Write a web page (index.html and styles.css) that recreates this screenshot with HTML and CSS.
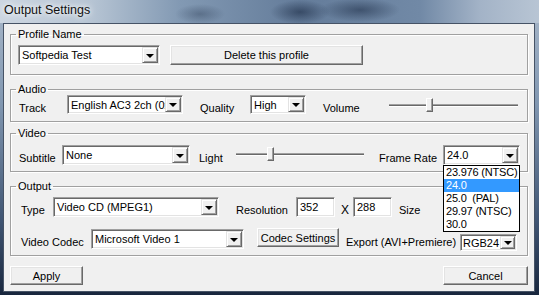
FILE: index.html
```html
<!DOCTYPE html>
<html lang="en">

<head>
  <meta charset="UTF-8">
  <title>Output Settings</title>
  <link rel="stylesheet" href="styles.css">
</head>

<body>
  <div class="window">
    <div class="titlebar">Output Settings</div>
    <div class="client">

      <fieldset class="group group-profile">
        <legend>Profile Name</legend>
        <div class="row">
          <div class="combo cb-profile"><span class="val">Softpedia Test</span><span class="arrow"></span></div>
          <button class="btn btn-delete">Delete this profile</button>
        </div>
      </fieldset>

      <fieldset class="group group-audio">
        <legend>Audio</legend>
        <div class="row row-short">
          <span class="lbl lbl-track">Track</span>
          <div class="combo cb-track"><span class="val">English AC3 2ch (0x80)</span><span class="arrow"></span></div>
          <span class="lbl lbl-quality">Quality</span>
          <div class="combo cb-quality"><span class="val">High</span><span class="arrow"></span></div>
          <span class="lbl lbl-volume">Volume</span>
          <div class="slider sl-volume"><span class="thumb"></span></div>
        </div>
      </fieldset>

      <fieldset class="group group-video">
        <legend>Video</legend>
        <div class="row">
          <span class="lbl lbl-subtitle">Subtitle</span>
          <div class="combo cb-subtitle"><span class="val">None</span><span class="arrow"></span></div>
          <span class="lbl lbl-light">Light</span>
          <div class="slider sl-light"><span class="thumb"></span></div>
          <span class="lbl lbl-rate">Frame Rate</span>
          <div class="dropdown">
            <div class="combo cb-rate"><span class="val">24.0</span><span class="arrow"></span></div>
            <ul class="list">
              <li>23.976 (NTSC)</li>
              <li class="selected">24.0</li>
              <li>25.0 &nbsp;(PAL)</li>
              <li>29.97 (NTSC)</li>
              <li>30.0</li>
            </ul>
          </div>
        </div>
      </fieldset>

      <fieldset class="group group-output">
        <legend>Output</legend>
        <div class="row">
          <span class="lbl lbl-type">Type</span>
          <div class="combo cb-type"><span class="val">Video CD (MPEG1)</span><span class="arrow"></span></div>
          <span class="lbl lbl-res">Resolution</span>
          <div class="field">352</div>
          <span class="lbl lbl-x">X</span>
          <div class="field">288</div>
          <span class="lbl lbl-size">Size</span>
        </div>
        <div class="row row-codec">
          <span class="lbl lbl-codec">Video Codec</span>
          <div class="combo cb-codec"><span class="val">Microsoft Video 1</span><span class="arrow"></span></div>
          <button class="btn btn-codec">Codec Settings</button>
          <span class="lbl lbl-export">Export (AVI+Premiere)</span>
          <div class="combo cb-export"><span class="val">RGB24</span><span class="arrow"></span></div>
        </div>
      </fieldset>

      <div class="actions">
        <button class="btn btn-apply">Apply</button>
        <button class="btn btn-cancel">Cancel</button>
      </div>

    </div>
  </div>
</body>

</html>
```

FILE: styles.css
```css
body {
  margin: 0;
  width: 539px;
  height: 295px;
  overflow: hidden;
  font-family: "Liberation Sans", Arial, sans-serif;
  font-size: 11px;
  color: #000;
}

.window {
  height: 295px;
  background: linear-gradient(180deg, #a9b8ca 0, #8197b1 35%, #405573 75%, #18263d 100%);
}

.titlebar {
  height: 23px;
  padding-left: 4px;
  box-sizing: border-box;
  font-size: 12.5px;
  line-height: 20px;
  color: #111;
  text-shadow: 0 0 5px #fff, 0 0 8px #fff;
  background:
    radial-gradient(ellipse 30px 12px at 300px 12px, rgba(20, 35, 60, 0.55), transparent),
    radial-gradient(ellipse 40px 12px at 360px 10px, rgba(20, 35, 60, 0.5), transparent),
    radial-gradient(ellipse 25px 10px at 200px 14px, rgba(30, 45, 70, 0.35), transparent),
    linear-gradient(90deg, #ccd6e1 0, #b7c5d4 90px, #8299b3 180px, #647c9a 300px, #7189a6 420px, #a3b3c7 480px, #b8c5d4 539px);
}

.client {
  margin-left: 3px;
  width: 530px;
  height: 267px;
  border: 1px solid #465366;
  background: #f0f0f0;
}

/* group boxes */
.group {
  box-sizing: border-box;
  width: 518px;
  min-width: 0;
  margin: 0 0 0 6px;
  padding: 0 6px 0 7px;
  border: 1px solid #a0a0a0;
  box-shadow: inset 1px 1px 0 #fff, 1px 1px 0 #fff;
}

.group legend {
  margin-left: -2px;
  padding: 0 2px;
  line-height: 12px;
}

.group-profile {
  margin-top: 4px;
  padding-top: 5px;
  padding-bottom: 9px;
}

.group-audio {
  margin-top: 8px;
  padding-top: 0;
  padding-bottom: 7px;
}

.group-video {
  margin-top: 5px;
  padding-top: 6px;
  padding-bottom: 6px;
}

.group-output {
  margin-top: 8px;
  padding-top: 5px;
  padding-bottom: 6px;
}

.row {
  display: flex;
  align-items: center;
  height: 20px;
}

.row-short {
  height: 19px;
}

.row-codec {
  margin-top: 12px;
}

.lbl {
  flex: none;
  box-sizing: border-box;
  padding-top: 6px;
  line-height: 14px;
  white-space: nowrap;
}

.lbl-track { margin-left: 1px; width: 48px; }
.lbl-quality { margin-left: 17px; width: 50px; }
.lbl-volume { margin-left: 17px; width: 66px; }
.lbl-subtitle { margin-left: 1px; width: 43px; }
.lbl-light { margin-left: 9px; width: 37px; }
.lbl-rate { margin-left: 15px; width: 64px; }
.lbl-type { margin-left: 3px; width: 32px; }
.lbl-res { margin-left: 17px; width: 60px; }
.lbl-x { margin-left: 6px; width: 12px; font-size: 12px; }
.lbl-size { margin-left: 7px; }
.lbl-codec { margin-left: 3px; width: 70px; }
.lbl-export { margin-left: 7px; width: 114px; }

/* combo boxes and edit fields */
.combo,
.field {
  flex: none;
  box-sizing: border-box;
  display: flex;
  height: 100%;
  padding: 1px;
  background: #fff;
  border: 1px solid;
  border-color: #a0a0a0 #fff #fff #a0a0a0;
  box-shadow: inset 1px 1px 0 #696969, inset -1px -1px 0 #e3e3e3;
}

.combo .val {
  flex: 1;
  min-width: 0;
  overflow: hidden;
  white-space: nowrap;
  padding: 1px 0 0 2px;
  line-height: 14px;
}

.arrow {
  flex: none;
  box-sizing: border-box;
  width: 16px;
  display: flex;
  align-items: center;
  justify-content: center;
  background: #f0f0f0;
  border: 1px solid;
  border-color: #e3e3e3 #696969 #696969 #e3e3e3;
  box-shadow: inset 1px 1px 0 #fff, inset -1px -1px 0 #a0a0a0;
}

.arrow::after {
  content: "";
  border: 4px solid transparent;
  border-top-color: #000;
  border-bottom: 0;
  margin-top: 1px;
}

.field {
  width: 39px;
  padding: 2px 0 0 3px;
  line-height: 14px;
}

.cb-profile { width: 142px; }
.cb-track { width: 116px; }
.cb-quality { width: 56px; }
.cb-subtitle { width: 128px; }
.cb-rate { width: 77px; }
.cb-type { width: 166px; }
.cb-codec { width: 153px; }
.cb-export { width: 57px; height: 17px; margin-top: 7px; }
.cb-export .val { padding: 0 0 0 1px; }
.cb-export .arrow { width: 15px; }

/* track bars */
.slider {
  flex: none;
  height: 14px;
  background: linear-gradient(180deg, transparent 0 6px, #a0a0a0 6px 7px, #696969 7px 8px, #fff 8px 9px, transparent 9px);
}

.sl-volume { width: 129px; }
.sl-light { width: 128px; margin-top: -3px; }

.thumb {
  display: block;
  box-sizing: border-box;
  width: 7px;
  height: 14px;
  background: #f0f0f0;
  border: 1px solid;
  border-color: #fff #696969 #696969 #fff;
  box-shadow: inset -1px -1px 0 #a0a0a0;
}

.sl-volume .thumb { margin-left: 37px; }
.sl-light .thumb { margin-left: 31px; }

/* open frame rate list */
.dropdown {
  position: relative;
  height: 100%;
}

.dropdown .cb-rate {
  height: 100%;
}

.list {
  position: absolute;
  top: 100%;
  left: 0;
  z-index: 10;
  box-sizing: border-box;
  width: 77px;
  margin: 0;
  padding: 0;
  list-style: none;
  background: #fff;
  border: 1px solid #000;
  font-size: 11px;
  letter-spacing: -0.2px;
}

.list li {
  height: 13px;
  line-height: 13px;
  padding-left: 2px;
  white-space: nowrap;
}

.list .selected {
  background: #3399ff;
  color: #fff;
}

/* push buttons */
.btn {
  flex: none;
  box-sizing: border-box;
  height: 100%;
  margin: 0;
  padding: 0;
  font: inherit;
  color: #000;
  background: #f0f0f0;
  border: 1px solid;
  border-color: #fff #696969 #696969 #fff;
  box-shadow: inset -1px -1px 0 #a0a0a0, inset 1px 1px 0 #e3e3e3;
}

.btn-delete { width: 193px; margin-left: 10px; }
.btn-codec { width: 82px; margin-left: 13px; height: 19px; align-self: flex-start; margin-top: -1px; }

.actions {
  display: flex;
  justify-content: space-between;
  width: 518px;
  height: 19px;
  margin: 10px 0 0 6px;
}

.btn-apply { width: 73px; }
.btn-cancel { width: 85px; }
```
